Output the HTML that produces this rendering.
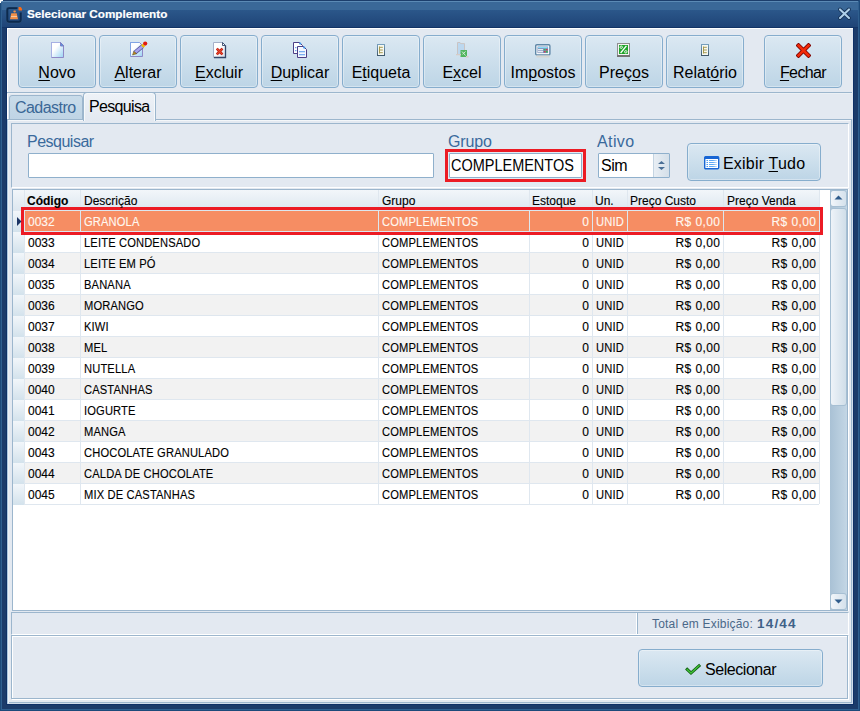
<!DOCTYPE html><html><head><meta charset="utf-8"><style>
*{box-sizing:border-box;margin:0;padding:0}
html,body{width:860px;height:711px;overflow:hidden;background:#1b3b6a;font-family:"Liberation Sans",sans-serif}
.a{position:absolute}
.nw{white-space:nowrap}
#title{left:0;top:0;width:860px;height:28px;background:linear-gradient(#1c3e6c 0,#1c3e6c 1px,#5b8ab5 1px,#5b8ab5 2px,#3a6898 2px,#3a6898 10px,#2b578a 10px,#1f4477 27px,#123466 27px)}
#client{left:7px;top:28px;width:846px;height:676px;background:#e3e9f1;border-top:1px solid #fff;border-left:1px solid #e6edf4}
.tb{top:35px;height:53px;width:78px;border:1px solid #86adcd;border-radius:4px;background:linear-gradient(#dbe8f2,#bdd5e6);box-shadow:inset 0 0 0 1px rgba(255,255,255,.35);text-align:center;font-size:16px;color:#000}
.tb .t{position:absolute;left:0;right:0;top:28px;line-height:18px;white-space:nowrap}
u{text-decoration:underline;text-underline-offset:2px}
.tb svg{position:absolute;top:6px}
.line{background:#9cb6cd}
.lbl{font-size:16px;color:#3a6a9c;line-height:18px}
.inp{background:#fff;border:1px solid #8fb0cc;border-radius:1px}
.cell{font-size:12px;line-height:20px;color:#000;white-space:nowrap;-webkit-text-stroke:0.12px currentColor}
.ls{letter-spacing:0.15px;transform:scaleX(0.93);transform-origin:0 0}
.r{text-align:right}
</style></head><body>
<div class="a" id="title"></div>
<div class="a" style="left:0;top:0;width:1px;height:711px;background:#1d4a7a"></div>
<div class="a" style="left:1px;top:1px;width:1px;height:709px;background:#2f5f8f"></div>
<div class="a" style="left:859px;top:0;width:1px;height:711px;background:#1d4a7a"></div>
<div class="a" style="left:858px;top:1px;width:1px;height:709px;background:#2f5f8f"></div>
<div class="a" style="left:0;top:710px;width:860px;height:1px;background:#1d4a7a"></div>
<div class="a" style="left:1px;top:709px;width:858px;height:1px;background:#2f5f8f"></div>
<div class="a" style="left:0;top:0;width:3px;height:1px;background:#fff"></div>
<div class="a" style="left:0;top:1px;width:1px;height:2px;background:#fff"></div>
<div class="a" style="left:1px;top:1px;width:1px;height:1px;background:#8fa8c4"></div>
<div class="a" style="left:6px;top:27px;width:1px;height:678px;background:#0e3066"></div>
<div class="a" style="left:853px;top:27px;width:1px;height:678px;background:#0e3066"></div>
<div class="a" style="left:6px;top:704px;width:848px;height:1px;background:#0e3066"></div>
<svg class="a" style="left:6px;top:7px" width="17" height="17" viewBox="0 0 17 17">
<path d="M11.5 1.2 H3 Q1.2 1.2 1.2 3 V13 Q1.2 14.8 3 14.8 H13 Q14.8 14.8 14.8 13 V5.5" fill="none" stroke="#0c2a4e" stroke-width="2.2"/>
<path d="M11.5 0 H3 Q0 0 0 3 V13 Q0 16 3 16 H13 Q16 16 16 13 V5.5" fill="none" stroke="#3a5e86" stroke-width="0.6" opacity="0.7"/>
<path d="M4 12.2 L5.3 6.2 L10.7 6.2 L12 12.2 Z" fill="#f29048"/><path d="M5 9.5 H11" stroke="#f8c8a0" stroke-width="1"/><rect x="7.3" y="3.6" width="2.6" height="1.8" rx="0.8" fill="#f29048"/>
<path d="M12.6 0 H14.6 L16 1.6 V3.5 H12.6 Z" fill="#ff6a10"/></svg>
<div class="a nw" style="left:27px;top:6px;font-size:11.7px;font-weight:bold;color:#fff;line-height:16px;-webkit-text-stroke:0.2px #fff">Selecionar Complemento</div>
<svg class="a" style="left:837px;top:6px" width="15" height="15" viewBox="0 0 15 15"><path d="M3 3.4 L12 12 M12 3.4 L3 12" stroke="#10294a" stroke-width="3.8" stroke-linecap="round" opacity="0.85"/><path d="M3 3.4 L12 12 M12 3.4 L3 12" stroke="#aed0ea" stroke-width="2.1" stroke-linecap="round"/></svg>
<div class="a" id="client"></div>
<div class="a" style="left:7px;top:28px;width:1px;height:91px;background:#fff"></div>
<div class="a tb" style="left:18px"><div class="t"><u>N</u>ovo</div></div>
<div class="a tb" style="left:99px"><div class="t"><u>A</u>lterar</div></div>
<div class="a tb" style="left:180px"><div class="t"><u>E</u>xcluir</div></div>
<div class="a tb" style="left:261px"><div class="t"><u>D</u>uplicar</div></div>
<div class="a tb" style="left:342px"><div class="t">E<u>t</u>iqueta</div></div>
<div class="a tb" style="left:423px"><div class="t">E<u>x</u>cel</div></div>
<div class="a tb" style="left:504px"><div class="t">Im<u>p</u>ostos</div></div>
<div class="a tb" style="left:585px"><div class="t">Preç<u>o</u>s</div></div>
<div class="a tb" style="left:666px"><div class="t">Relat<u>ó</u>rio</div></div>
<div class="a tb" style="left:764px"><div class="t"><span style="letter-spacing:-0.6px"><u>F</u>echar</span></div></div>
<svg class="a" style="left:51px;top:42px" width="14" height="17" viewBox="0 0 14 17"><defs><linearGradient id="gd" x1="0" y1="0" x2="1" y2="1"><stop offset="0.35" stop-color="#fff"/><stop offset="1" stop-color="#98d2f4"/></linearGradient></defs><path d="M0.5 0.5 H9.5 L12.5 3.5 V15.5 H0.5 Z" fill="url(#gd)" stroke="#8e88c6"/><path d="M0.5 15.5 V0.5 H9" fill="none" stroke="#a6b0e4"/><path d="M9.5 0.5 V4 H12.5 Z" fill="#4a9ee8" stroke="#7a78c0" stroke-width="0.9"/></svg>
<svg class="a" style="left:130px;top:41px" width="18" height="17" viewBox="0 0 18 17"><defs><linearGradient id="ga" x1="0" y1="0" x2="1" y2="1"><stop offset="0.35" stop-color="#fff"/><stop offset="1" stop-color="#98d2f4"/></linearGradient></defs><path d="M0.5 1.5 H9.5 L12.5 4.5 V15.5 H0.5 Z" fill="url(#ga)" stroke="#8e88c6"/><path d="M0.5 15.5 V1.5 H9" fill="none" stroke="#7fa4e4"/><path d="M4.6 11.8 L12.6 5.2" stroke="#5a58a0" stroke-width="4.2"/><path d="M4.6 11.8 L12.6 5.2" stroke="#a8a4ec" stroke-width="2.6"/><path d="M2.6 14 L3.8 10.4 L6.6 12.6 Z" fill="#c8901c" stroke="#5a4a20" stroke-width="0.6"/><path d="M12.2 5.6 L14 4" stroke="#f0c000" stroke-width="3.4"/><circle cx="15.2" cy="2.6" r="2.1" fill="#e21a0c"/></svg>
<svg class="a" style="left:213px;top:42px" width="14" height="17" viewBox="0 0 14 17"><defs><linearGradient id="gx" x1="0" y1="0" x2="1" y2="1"><stop offset="0.4" stop-color="#fff"/><stop offset="1" stop-color="#d8dce8"/></linearGradient></defs><path d="M0.5 0.5 H9.5 L12.5 3.5 V15.5 H0.5 Z" fill="url(#gx)" stroke="#a4b0c8"/><path d="M12.5 3.5 V15.5 H1" fill="none" stroke="#34476a" stroke-width="1.3"/><path d="M9.5 0.5 L12.5 3.5 H9.5Z" fill="#fff" stroke="#34476a" stroke-width="0.9"/><path d="M3.8 6.6 L9.4 12.4 M9.4 6.6 L3.8 12.4" stroke="#b81408" stroke-width="2.6"/><path d="M3.8 6.6 L9.4 12.4 M9.4 6.6 L3.8 12.4" stroke="#e84a30" stroke-width="1.2"/></svg>
<svg class="a" style="left:293px;top:42px" width="15" height="17" viewBox="0 0 15 17"><path d="M0.5 0.5 H6.5 L9.5 3.5 V11.5 H0.5 Z" fill="#fff" stroke="#4c3f86"/><rect x="2" y="5" width="1.5" height="1.2" fill="#70a8f0"/><rect x="2" y="8" width="1.5" height="1.2" fill="#70a8f0"/><path d="M4.5 4.5 H10.5 L13.5 7.5 V15.5 H4.5 Z" fill="#f4f8ff" stroke="#4c3f86"/><rect x="6" y="9" width="6" height="1.3" fill="#79aef2"/><rect x="6" y="12" width="6" height="1.3" fill="#79aef2"/><circle cx="11.2" cy="5.6" r="1.1" fill="#3a8ee8"/><circle cx="7.2" cy="1.6" r="1.1" fill="#3a8ee8"/></svg>
<svg class="a" style="left:377px;top:44px" width="9" height="13" viewBox="0 0 9 13"><defs><linearGradient id="ge" x1="0" y1="0" x2="0" y2="1"><stop offset="0" stop-color="#78a2c0"/><stop offset="1" stop-color="#3e5668"/></linearGradient></defs><rect x="0" y="0" width="8" height="12" fill="url(#ge)"/><rect x="1" y="1" width="6" height="10" fill="#f6f8f0"/><path d="M2.5 2.5 V9.5 M2.5 3.3 H5.8 M2.5 6 H5.8 M2.5 8.7 H5.8" stroke="#a89a50" stroke-width="1"/></svg>
<svg class="a" style="left:456px;top:42px" width="13" height="17" viewBox="0 0 13 17" opacity="0.85"><path d="M1.5 0.5 H4 L4.6 1.6 H8.5 V12.5 H1.5 Z" fill="#b8d6f0" stroke="#c8b8b0" stroke-width="0.8"/><rect x="4.5" y="8" width="6.5" height="7" fill="#3aae46"/><path d="M6 9.5 L9.5 13.5 M9.5 9.5 L6.5 12.3" stroke="#d8f0d8" stroke-width="1"/><path d="M0 12.6 H5 M10 14.8 H12.5" stroke="#d8c8c0" stroke-width="1.4"/></svg>
<svg class="a" style="left:535px;top:44px" width="16" height="14" viewBox="0 0 16 14"><rect x="0.7" y="0.7" width="14.2" height="10.2" rx="1.2" fill="#fff" stroke="#5f88a8" stroke-width="1.4"/><rect x="2.5" y="2.5" width="10.6" height="6.6" fill="#7a90b8"/><rect x="3" y="3" width="9.6" height="1.2" fill="#8adcf8"/><rect x="3" y="5.2" width="5" height="1.1" fill="#fff"/><rect x="3" y="7.2" width="5" height="1.1" fill="#fff"/><rect x="9.2" y="5.1" width="1.3" height="1.3" fill="#20d020"/><rect x="11.2" y="5.1" width="1.3" height="1.3" fill="#f02030"/><rect x="9.2" y="7.1" width="1.3" height="1.3" fill="#f02030"/><rect x="11.2" y="7.1" width="1.3" height="1.3" fill="#20d020"/><rect x="1.5" y="11.5" width="13" height="2" fill="#d6d6d2"/></svg>
<svg class="a" style="left:617px;top:43px" width="13" height="14" viewBox="0 0 13 14"><rect x="0.5" y="0.5" width="12" height="12.5" fill="#f6f4f4" stroke="#8e8e8e"/><rect x="2" y="2" width="9" height="9" fill="#1fa52a"/><circle cx="4.2" cy="4.2" r="1.2" fill="none" stroke="#fff" stroke-width="0.9"/><circle cx="8.8" cy="8.8" r="1.2" fill="none" stroke="#fff" stroke-width="0.9"/><path d="M3.6 10 L9.4 2.8" stroke="#fff" stroke-width="1.3"/><rect x="0" y="12" width="13" height="2" fill="#747474"/></svg>
<svg class="a" style="left:701px;top:44px" width="9" height="13" viewBox="0 0 9 13"><rect x="0" y="0" width="8" height="12" fill="url(#ge)"/><rect x="1" y="1" width="6" height="10" fill="#f6f8f0"/><path d="M2.5 2.5 V9.5 M2.5 3.3 H5.8 M2.5 6 H5.8 M2.5 8.7 H5.8" stroke="#a89a50" stroke-width="1"/></svg>
<svg class="a" style="left:796px;top:43px" width="15" height="15" viewBox="0 0 15 15"><path d="M2.5 2.5 L12.5 12.5 M12.5 2.5 L2.5 12.5" stroke="#7a0000" stroke-width="4.2" stroke-linecap="square"/><path d="M2.5 2.5 L12.5 12.5 M12.5 2.5 L2.5 12.5" stroke="#f22a08" stroke-width="2.6" stroke-linecap="square"/></svg>
<div class="a line" style="left:7px;top:92px;width:845px;height:1px"></div>
<div class="a" style="left:7px;top:93px;width:845px;height:1px;background:#ebf0f5"></div>
<div class="a" style="left:7px;top:119px;width:845px;height:585px;border-top:1px solid #9cb6cd;border-right:1px solid #9cb6cd;box-shadow:1px 0 0 #d0dcea"></div>
<div class="a" style="left:8px;top:120px;width:843px;height:1px;background:#f4f7fa"></div>
<div class="a" style="left:155px;top:97px;width:697px;height:23px;border-left:1px solid #9cb6cd;border-bottom:1px solid #9cb6cd"></div>
<div class="a" style="left:9px;top:95px;width:74px;height:25px;border:1px solid #9cb6cd;border-radius:3px 3px 0 0;background:linear-gradient(#c9dcea,#bfd4e5)"></div>
<div class="a nw" style="left:15px;top:99px;font-size:16px;line-height:18px;color:#3a6796;letter-spacing:-0.55px">Cadastro</div>
<div class="a" style="left:83px;top:92px;width:73px;height:29px;border:1px solid #9cb6cd;border-bottom:none;border-radius:4px 4px 0 0;background:linear-gradient(#eef2f7,#e3e9f1);box-shadow:inset 1px 1px 0 #f6f9fb,inset -1px 0 0 #f6f9fb"></div>
<div class="a nw" style="left:89px;top:98px;font-size:16px;line-height:18px;color:#000;letter-spacing:-0.65px">Pesquisa</div>
<div class="a" style="left:11px;top:123px;width:838px;height:65px;border-top:1px solid #9cb6cd;border-left:1px solid #9cb6cd;border-right:1px solid #fff;border-bottom:1px solid #fff"></div>
<div class="a nw lbl" style="left:27px;top:133px;letter-spacing:-0.5px">Pesquisar</div>
<div class="a inp" style="left:28px;top:153px;width:406px;height:25px"></div>
<div class="a nw lbl" style="left:448px;top:133px;letter-spacing:-0.15px">Grupo</div>
<div class="a" style="left:445px;top:149px;width:141px;height:33px;border:3px solid #ec1b24"></div>
<div class="a inp" style="left:449px;top:153px;width:133px;height:25px"></div>
<div class="a nw" style="left:451px;top:157px;font-size:16px;line-height:18px;transform:scaleX(0.905);transform-origin:0 0">COMPLEMENTOS</div>
<div class="a nw lbl" style="left:597px;top:133px;letter-spacing:0.4px">Ativo</div>
<div class="a inp" style="left:598px;top:153px;width:72px;height:25px"></div>
<div class="a" style="left:653px;top:154px;width:16px;height:23px;border-left:1px solid #c4d4e2;background:linear-gradient(90deg,#e8eef4,#d4dfe9)"></div>
<svg class="a" style="left:657px;top:160px" width="9" height="11" viewBox="0 0 9 11"><path d="M1 4 L4.5 1 L8 4 Z M1 7 L4.5 10 L8 7 Z" fill="#4a6f96"/></svg>
<div class="a nw" style="left:601px;top:157px;font-size:16px;line-height:18px;letter-spacing:-0.5px">Sim</div>
<div class="a" style="left:687px;top:143px;width:134px;height:38px;border:1px solid #86adcd;border-radius:4px;background:linear-gradient(#dbe8f2,#bdd5e6);box-shadow:inset 0 0 0 1px rgba(255,255,255,.35)"></div>
<svg class="a" style="left:704px;top:156px" width="16" height="14" viewBox="0 0 16 14"><defs><linearGradient id="gl" x1="0" x2="1"><stop offset="0.5" stop-color="#5eaaf6"/><stop offset="1" stop-color="#cfe6fc"/></linearGradient></defs><rect x="0.7" y="0.7" width="14" height="12" rx="1" fill="#fff" stroke="#1866d4" stroke-width="1.4"/><rect x="1" y="0.5" width="13.5" height="2.5" fill="#1866d4"/><path d="M2.5 4.5 H4 M2.5 6.5 H4 M2.5 8.5 H4 M2.5 10.5 H4" stroke="#4c9cf0" stroke-width="1"/><path d="M5 4.5 H13 M5 6.5 H13 M5 8.5 H13 M5 10.5 H13" stroke="url(#gl)" stroke-width="1"/></svg>
<div class="a nw" style="left:723px;top:155px;font-size:16px;line-height:18px;letter-spacing:0.2px">Exibir <u>T</u>udo</div>
<div class="a" style="left:12px;top:189px;width:836px;height:422px;border:1px solid #9cb6cd;background:#fff;box-shadow:1px 0 0 #fff"></div>
<div class="a" style="left:13px;top:190px;width:806px;height:20px;background:linear-gradient(#f2f6fa,#dde7f0)"></div>
<div class="a" style="left:13px;top:211px;width:11px;height:21px;background:linear-gradient(#f2f6fa,#d3e2ec)"></div>
<div class="a" style="left:13px;top:232px;width:11px;height:21px;background:linear-gradient(#f2f6fa,#d3e2ec)"></div>
<div class="a" style="left:13px;top:253px;width:11px;height:21px;background:linear-gradient(#f2f6fa,#d3e2ec)"></div>
<div class="a" style="left:13px;top:274px;width:11px;height:21px;background:linear-gradient(#f2f6fa,#d3e2ec)"></div>
<div class="a" style="left:13px;top:295px;width:11px;height:21px;background:linear-gradient(#f2f6fa,#d3e2ec)"></div>
<div class="a" style="left:13px;top:316px;width:11px;height:21px;background:linear-gradient(#f2f6fa,#d3e2ec)"></div>
<div class="a" style="left:13px;top:337px;width:11px;height:21px;background:linear-gradient(#f2f6fa,#d3e2ec)"></div>
<div class="a" style="left:13px;top:358px;width:11px;height:21px;background:linear-gradient(#f2f6fa,#d3e2ec)"></div>
<div class="a" style="left:13px;top:379px;width:11px;height:21px;background:linear-gradient(#f2f6fa,#d3e2ec)"></div>
<div class="a" style="left:13px;top:400px;width:11px;height:21px;background:linear-gradient(#f2f6fa,#d3e2ec)"></div>
<div class="a" style="left:13px;top:421px;width:11px;height:21px;background:linear-gradient(#f2f6fa,#d3e2ec)"></div>
<div class="a" style="left:13px;top:442px;width:11px;height:21px;background:linear-gradient(#f2f6fa,#d3e2ec)"></div>
<div class="a" style="left:13px;top:463px;width:11px;height:21px;background:linear-gradient(#f2f6fa,#d3e2ec)"></div>
<div class="a" style="left:13px;top:484px;width:11px;height:21px;background:linear-gradient(#f2f6fa,#d3e2ec)"></div>
<div class="a" style="left:25px;top:211px;width:794px;height:20px;background:#f68d63"></div>
<div class="a" style="left:24px;top:231px;width:795px;height:1px;background:#dfe7ef"></div>
<div class="a" style="left:25px;top:232px;width:794px;height:20px;background:#ffffff"></div>
<div class="a" style="left:24px;top:252px;width:795px;height:1px;background:#dfe7ef"></div>
<div class="a" style="left:25px;top:253px;width:794px;height:20px;background:#f2f2f2"></div>
<div class="a" style="left:24px;top:273px;width:795px;height:1px;background:#dfe7ef"></div>
<div class="a" style="left:25px;top:274px;width:794px;height:20px;background:#ffffff"></div>
<div class="a" style="left:24px;top:294px;width:795px;height:1px;background:#dfe7ef"></div>
<div class="a" style="left:25px;top:295px;width:794px;height:20px;background:#f2f2f2"></div>
<div class="a" style="left:24px;top:315px;width:795px;height:1px;background:#dfe7ef"></div>
<div class="a" style="left:25px;top:316px;width:794px;height:20px;background:#ffffff"></div>
<div class="a" style="left:24px;top:336px;width:795px;height:1px;background:#dfe7ef"></div>
<div class="a" style="left:25px;top:337px;width:794px;height:20px;background:#f2f2f2"></div>
<div class="a" style="left:24px;top:357px;width:795px;height:1px;background:#dfe7ef"></div>
<div class="a" style="left:25px;top:358px;width:794px;height:20px;background:#ffffff"></div>
<div class="a" style="left:24px;top:378px;width:795px;height:1px;background:#dfe7ef"></div>
<div class="a" style="left:25px;top:379px;width:794px;height:20px;background:#f2f2f2"></div>
<div class="a" style="left:24px;top:399px;width:795px;height:1px;background:#dfe7ef"></div>
<div class="a" style="left:25px;top:400px;width:794px;height:20px;background:#ffffff"></div>
<div class="a" style="left:24px;top:420px;width:795px;height:1px;background:#dfe7ef"></div>
<div class="a" style="left:25px;top:421px;width:794px;height:20px;background:#f2f2f2"></div>
<div class="a" style="left:24px;top:441px;width:795px;height:1px;background:#dfe7ef"></div>
<div class="a" style="left:25px;top:442px;width:794px;height:20px;background:#ffffff"></div>
<div class="a" style="left:24px;top:462px;width:795px;height:1px;background:#dfe7ef"></div>
<div class="a" style="left:25px;top:463px;width:794px;height:20px;background:#f2f2f2"></div>
<div class="a" style="left:24px;top:483px;width:795px;height:1px;background:#dfe7ef"></div>
<div class="a" style="left:25px;top:484px;width:794px;height:20px;background:#ffffff"></div>
<div class="a" style="left:24px;top:504px;width:795px;height:1px;background:#dfe7ef"></div>
<div class="a" style="left:24px;top:190px;width:1px;height:314px;background:#dfe7ef"></div>
<div class="a" style="left:80px;top:190px;width:1px;height:314px;background:#dfe7ef"></div>
<div class="a" style="left:378px;top:190px;width:1px;height:314px;background:#dfe7ef"></div>
<div class="a" style="left:529px;top:190px;width:1px;height:314px;background:#dfe7ef"></div>
<div class="a" style="left:592px;top:190px;width:1px;height:314px;background:#dfe7ef"></div>
<div class="a" style="left:627px;top:190px;width:1px;height:314px;background:#dfe7ef"></div>
<div class="a" style="left:723px;top:190px;width:1px;height:314px;background:#dfe7ef"></div>
<div class="a" style="left:819px;top:190px;width:1px;height:314px;background:#dfe7ef"></div>
<div class="a" style="left:13px;top:210px;width:806px;height:1px;background:#dfe7ef"></div>
<div class="a" style="left:24px;top:210px;width:796px;height:22px;border:1px solid #dce7ef"></div>
<div class="a" style="left:80px;top:211px;width:1px;height:20px;background:#dce7ef"></div>
<div class="a" style="left:378px;top:211px;width:1px;height:20px;background:#dce7ef"></div>
<div class="a" style="left:529px;top:211px;width:1px;height:20px;background:#dce7ef"></div>
<div class="a" style="left:592px;top:211px;width:1px;height:20px;background:#dce7ef"></div>
<div class="a" style="left:627px;top:211px;width:1px;height:20px;background:#dce7ef"></div>
<div class="a" style="left:723px;top:211px;width:1px;height:20px;background:#dce7ef"></div>
<div class="a" style="left:21px;top:207px;width:802px;height:28px;border:3px solid #ec1b24"></div>
<svg class="a" style="left:17px;top:217px" width="5" height="10" viewBox="0 0 5 10"><path d="M0 0 L4.5 4.5 L0 9 Z" fill="#1c3464"/></svg>
<div class="a cell" style="left:27px;top:191px;font-weight:bold;">Código</div>
<div class="a cell" style="left:84px;top:191px;">Descrição</div>
<div class="a cell" style="left:382px;top:191px;">Grupo</div>
<div class="a cell" style="left:532px;top:191px;">Estoque</div>
<div class="a cell" style="left:595px;top:191px;">Un.</div>
<div class="a cell" style="left:630px;top:191px;">Preço Custo</div>
<div class="a cell" style="left:727px;top:191px;">Preço Venda</div>
<div class="a cell" style="left:28px;top:212px;color:#fff8f0">0032</div>
<div class="a cell ls" style="left:84px;top:212px;color:#fff8f0">GRANOLA</div>
<div class="a cell ls" style="left:382px;top:212px;color:#fff8f0">COMPLEMENTOS</div>
<div class="a cell r" style="left:530px;width:59px;top:212px;color:#fff8f0">0</div>
<div class="a cell ls" style="left:596px;top:212px;color:#fff8f0">UNID</div>
<div class="a cell r" style="left:628px;width:92.4px;top:212px;color:#fff8f0;letter-spacing:0.4px">R$ 0,00</div>
<div class="a cell r" style="left:724px;width:92.4px;top:212px;color:#fff8f0;letter-spacing:0.4px">R$ 0,00</div>
<div class="a cell" style="left:28px;top:233px;color:#000">0033</div>
<div class="a cell ls" style="left:84px;top:233px;color:#000">LEITE CONDENSADO</div>
<div class="a cell ls" style="left:382px;top:233px;color:#000">COMPLEMENTOS</div>
<div class="a cell r" style="left:530px;width:59px;top:233px;color:#000">0</div>
<div class="a cell ls" style="left:596px;top:233px;color:#000">UNID</div>
<div class="a cell r" style="left:628px;width:92.4px;top:233px;color:#000;letter-spacing:0.4px">R$ 0,00</div>
<div class="a cell r" style="left:724px;width:92.4px;top:233px;color:#000;letter-spacing:0.4px">R$ 0,00</div>
<div class="a cell" style="left:28px;top:254px;color:#000">0034</div>
<div class="a cell ls" style="left:84px;top:254px;color:#000">LEITE EM PÓ</div>
<div class="a cell ls" style="left:382px;top:254px;color:#000">COMPLEMENTOS</div>
<div class="a cell r" style="left:530px;width:59px;top:254px;color:#000">0</div>
<div class="a cell ls" style="left:596px;top:254px;color:#000">UNID</div>
<div class="a cell r" style="left:628px;width:92.4px;top:254px;color:#000;letter-spacing:0.4px">R$ 0,00</div>
<div class="a cell r" style="left:724px;width:92.4px;top:254px;color:#000;letter-spacing:0.4px">R$ 0,00</div>
<div class="a cell" style="left:28px;top:275px;color:#000">0035</div>
<div class="a cell ls" style="left:84px;top:275px;color:#000">BANANA</div>
<div class="a cell ls" style="left:382px;top:275px;color:#000">COMPLEMENTOS</div>
<div class="a cell r" style="left:530px;width:59px;top:275px;color:#000">0</div>
<div class="a cell ls" style="left:596px;top:275px;color:#000">UNID</div>
<div class="a cell r" style="left:628px;width:92.4px;top:275px;color:#000;letter-spacing:0.4px">R$ 0,00</div>
<div class="a cell r" style="left:724px;width:92.4px;top:275px;color:#000;letter-spacing:0.4px">R$ 0,00</div>
<div class="a cell" style="left:28px;top:296px;color:#000">0036</div>
<div class="a cell ls" style="left:84px;top:296px;color:#000">MORANGO</div>
<div class="a cell ls" style="left:382px;top:296px;color:#000">COMPLEMENTOS</div>
<div class="a cell r" style="left:530px;width:59px;top:296px;color:#000">0</div>
<div class="a cell ls" style="left:596px;top:296px;color:#000">UNID</div>
<div class="a cell r" style="left:628px;width:92.4px;top:296px;color:#000;letter-spacing:0.4px">R$ 0,00</div>
<div class="a cell r" style="left:724px;width:92.4px;top:296px;color:#000;letter-spacing:0.4px">R$ 0,00</div>
<div class="a cell" style="left:28px;top:317px;color:#000">0037</div>
<div class="a cell ls" style="left:84px;top:317px;color:#000">KIWI</div>
<div class="a cell ls" style="left:382px;top:317px;color:#000">COMPLEMENTOS</div>
<div class="a cell r" style="left:530px;width:59px;top:317px;color:#000">0</div>
<div class="a cell ls" style="left:596px;top:317px;color:#000">UNID</div>
<div class="a cell r" style="left:628px;width:92.4px;top:317px;color:#000;letter-spacing:0.4px">R$ 0,00</div>
<div class="a cell r" style="left:724px;width:92.4px;top:317px;color:#000;letter-spacing:0.4px">R$ 0,00</div>
<div class="a cell" style="left:28px;top:338px;color:#000">0038</div>
<div class="a cell ls" style="left:84px;top:338px;color:#000">MEL</div>
<div class="a cell ls" style="left:382px;top:338px;color:#000">COMPLEMENTOS</div>
<div class="a cell r" style="left:530px;width:59px;top:338px;color:#000">0</div>
<div class="a cell ls" style="left:596px;top:338px;color:#000">UNID</div>
<div class="a cell r" style="left:628px;width:92.4px;top:338px;color:#000;letter-spacing:0.4px">R$ 0,00</div>
<div class="a cell r" style="left:724px;width:92.4px;top:338px;color:#000;letter-spacing:0.4px">R$ 0,00</div>
<div class="a cell" style="left:28px;top:359px;color:#000">0039</div>
<div class="a cell ls" style="left:84px;top:359px;color:#000">NUTELLA</div>
<div class="a cell ls" style="left:382px;top:359px;color:#000">COMPLEMENTOS</div>
<div class="a cell r" style="left:530px;width:59px;top:359px;color:#000">0</div>
<div class="a cell ls" style="left:596px;top:359px;color:#000">UNID</div>
<div class="a cell r" style="left:628px;width:92.4px;top:359px;color:#000;letter-spacing:0.4px">R$ 0,00</div>
<div class="a cell r" style="left:724px;width:92.4px;top:359px;color:#000;letter-spacing:0.4px">R$ 0,00</div>
<div class="a cell" style="left:28px;top:380px;color:#000">0040</div>
<div class="a cell ls" style="left:84px;top:380px;color:#000">CASTANHAS</div>
<div class="a cell ls" style="left:382px;top:380px;color:#000">COMPLEMENTOS</div>
<div class="a cell r" style="left:530px;width:59px;top:380px;color:#000">0</div>
<div class="a cell ls" style="left:596px;top:380px;color:#000">UNID</div>
<div class="a cell r" style="left:628px;width:92.4px;top:380px;color:#000;letter-spacing:0.4px">R$ 0,00</div>
<div class="a cell r" style="left:724px;width:92.4px;top:380px;color:#000;letter-spacing:0.4px">R$ 0,00</div>
<div class="a cell" style="left:28px;top:401px;color:#000">0041</div>
<div class="a cell ls" style="left:84px;top:401px;color:#000">IOGURTE</div>
<div class="a cell ls" style="left:382px;top:401px;color:#000">COMPLEMENTOS</div>
<div class="a cell r" style="left:530px;width:59px;top:401px;color:#000">0</div>
<div class="a cell ls" style="left:596px;top:401px;color:#000">UNID</div>
<div class="a cell r" style="left:628px;width:92.4px;top:401px;color:#000;letter-spacing:0.4px">R$ 0,00</div>
<div class="a cell r" style="left:724px;width:92.4px;top:401px;color:#000;letter-spacing:0.4px">R$ 0,00</div>
<div class="a cell" style="left:28px;top:422px;color:#000">0042</div>
<div class="a cell ls" style="left:84px;top:422px;color:#000">MANGA</div>
<div class="a cell ls" style="left:382px;top:422px;color:#000">COMPLEMENTOS</div>
<div class="a cell r" style="left:530px;width:59px;top:422px;color:#000">0</div>
<div class="a cell ls" style="left:596px;top:422px;color:#000">UNID</div>
<div class="a cell r" style="left:628px;width:92.4px;top:422px;color:#000;letter-spacing:0.4px">R$ 0,00</div>
<div class="a cell r" style="left:724px;width:92.4px;top:422px;color:#000;letter-spacing:0.4px">R$ 0,00</div>
<div class="a cell" style="left:28px;top:443px;color:#000">0043</div>
<div class="a cell ls" style="left:84px;top:443px;color:#000">CHOCOLATE GRANULADO</div>
<div class="a cell ls" style="left:382px;top:443px;color:#000">COMPLEMENTOS</div>
<div class="a cell r" style="left:530px;width:59px;top:443px;color:#000">0</div>
<div class="a cell ls" style="left:596px;top:443px;color:#000">UNID</div>
<div class="a cell r" style="left:628px;width:92.4px;top:443px;color:#000;letter-spacing:0.4px">R$ 0,00</div>
<div class="a cell r" style="left:724px;width:92.4px;top:443px;color:#000;letter-spacing:0.4px">R$ 0,00</div>
<div class="a cell" style="left:28px;top:464px;color:#000">0044</div>
<div class="a cell ls" style="left:84px;top:464px;color:#000">CALDA DE CHOCOLATE</div>
<div class="a cell ls" style="left:382px;top:464px;color:#000">COMPLEMENTOS</div>
<div class="a cell r" style="left:530px;width:59px;top:464px;color:#000">0</div>
<div class="a cell ls" style="left:596px;top:464px;color:#000">UNID</div>
<div class="a cell r" style="left:628px;width:92.4px;top:464px;color:#000;letter-spacing:0.4px">R$ 0,00</div>
<div class="a cell r" style="left:724px;width:92.4px;top:464px;color:#000;letter-spacing:0.4px">R$ 0,00</div>
<div class="a cell" style="left:28px;top:485px;color:#000">0045</div>
<div class="a cell ls" style="left:84px;top:485px;color:#000">MIX DE CASTANHAS</div>
<div class="a cell ls" style="left:382px;top:485px;color:#000">COMPLEMENTOS</div>
<div class="a cell r" style="left:530px;width:59px;top:485px;color:#000">0</div>
<div class="a cell ls" style="left:596px;top:485px;color:#000">UNID</div>
<div class="a cell r" style="left:628px;width:92.4px;top:485px;color:#000;letter-spacing:0.4px">R$ 0,00</div>
<div class="a cell r" style="left:724px;width:92.4px;top:485px;color:#000;letter-spacing:0.4px">R$ 0,00</div>
<div class="a" style="left:830px;top:190px;width:17px;height:420px;background:linear-gradient(90deg,#a9c1d5,#c3d6e5)"></div>
<div class="a" style="left:830px;top:190px;width:17px;height:17px;border:1px solid #a6bfd3;border-radius:3px;background:linear-gradient(90deg,#f2f6fa,#d4e1ec)"></div>
<svg class="a" style="left:834px;top:195px" width="9" height="5" viewBox="0 0 9 5"><path d="M0.5 4.5 L4.5 0.5 L8.5 4.5 Z" fill="#2f5c8c"/></svg>
<div class="a" style="left:830px;top:208px;width:17px;height:198px;border:1px solid #a6bfd3;border-radius:3px;background:linear-gradient(90deg,#eef3f8,#d0dee9)"></div>
<div class="a" style="left:830px;top:593px;width:17px;height:17px;border:1px solid #a6bfd3;border-radius:3px;background:linear-gradient(90deg,#f2f6fa,#d4e1ec)"></div>
<svg class="a" style="left:834px;top:599px" width="9" height="5" viewBox="0 0 9 5"><path d="M0.5 0.5 L4.5 4.5 L8.5 0.5 Z" fill="#2f5c8c"/></svg>
<div class="a" style="left:11px;top:612px;width:838px;height:23px;border-top:1px solid #9cb6cd;border-left:1px solid #9cb6cd;border-right:1px solid #fff;border-bottom:1px solid #fff"></div>
<div class="a" style="left:636px;top:613px;width:1px;height:21px;background:#fff"></div>
<div class="a line" style="left:637px;top:613px;width:1px;height:21px"></div>
<div class="a nw" style="left:652px;top:616px;font-size:12px;line-height:16px;color:#4a6888;letter-spacing:0.2px">Total em Exibição:</div>
<div class="a nw" style="left:757px;top:616px;font-size:13.5px;line-height:16px;color:#3f6288;font-weight:bold;letter-spacing:1.2px">14/44</div>
<div class="a" style="left:11px;top:635px;width:837px;height:64px;border:1px solid #9cb6cd;box-shadow:1px 1px 0 #fff,inset 1px 1px 0 #fff"></div>
<div class="a" style="left:638px;top:649px;width:185px;height:38px;border:1px solid #86adcd;border-radius:4px;background:linear-gradient(#dbe8f2,#bdd5e6);box-shadow:inset 0 0 0 1px rgba(255,255,255,.35)"></div>
<svg class="a" style="left:684px;top:663px" width="18" height="13" viewBox="0 0 18 13"><path d="M3.2 6.4 L7 10 L15 2.8" fill="none" stroke="#0e5e0e" stroke-width="3" stroke-linecap="square"/><path d="M3.2 6.4 L7 10 L15 2.8" fill="none" stroke="#40c038" stroke-width="1.4" stroke-linecap="square"/></svg>
<div class="a nw" style="left:705px;top:661px;font-size:16px;line-height:18px;letter-spacing:-0.45px">Selecionar</div>
<div class="a line" style="left:7px;top:702px;width:845px;height:1px"></div>
<div class="a" style="left:7px;top:703px;width:846px;height:1px;background:#d0dcea"></div>
<div class="a" style="left:7px;top:120px;width:1px;height:584px;background:#aac6de"></div>
<div class="a" style="left:8px;top:121px;width:1px;height:582px;background:#e9eff5"></div>
</body></html>
